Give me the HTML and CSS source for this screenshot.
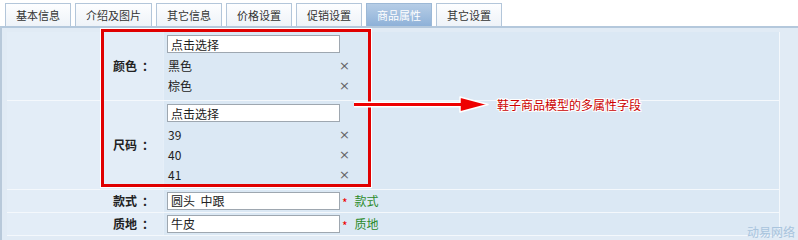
FILE: index.html
```html
<!DOCTYPE html>
<html lang="zh-CN">
<head>
  <meta charset="UTF-8">
  <title>商品属性</title>
  <link rel="stylesheet" href="styles.css">
</head>
<body>
<div class="page">
  <div class="tabs">
    <div class="tab">基本信息</div>
    <div class="tab">介绍及图片</div>
    <div class="tab">其它信息</div>
    <div class="tab">价格设置</div>
    <div class="tab">促销设置</div>
    <div class="tab active">商品属性</div>
    <div class="tab">其它设置</div>
  </div>
  <div class="panel">
    <table class="attrs">
      <tr class="multi first">
        <td class="label">颜色<span class="colon">：</span></td>
        <td class="data">
          <input class="field" type="text" value="点击选择">
          <div class="items">
            <div class="item"><span>黑色</span><span class="del">×</span></div>
            <div class="item"><span>棕色</span><span class="del">×</span></div>
          </div>
        </td>
      </tr>
      <tr class="multi">
        <td class="label">尺码<span class="colon">：</span></td>
        <td class="data">
          <input class="field" type="text" value="点击选择">
          <div class="items">
            <div class="item"><span>39</span><span class="del">×</span></div>
            <div class="item"><span>40</span><span class="del">×</span></div>
            <div class="item"><span>41</span><span class="del">×</span></div>
          </div>
        </td>
      </tr>
      <tr class="single">
        <td class="label">款式<span class="colon">：</span></td>
        <td class="data">
          <input class="field" type="text" value="圆头  中跟"><span class="req">*</span><span class="hint">款式</span>
        </td>
      </tr>
      <tr class="single">
        <td class="label">质地<span class="colon">：</span></td>
        <td class="data">
          <input class="field" type="text" value="牛皮"><span class="req">*</span><span class="hint">质地</span>
        </td>
      </tr>
    </table>

    <div class="mark-box"></div>
    <svg class="mark-arrow" width="140" height="20" viewBox="0 0 140 20">
      <path d="M3 9.5 H112" stroke="#fff" stroke-width="6" fill="none"/>
      <path d="M109 2 L137 9.5 L109 17 Z" fill="#e00" stroke="#fff" stroke-width="1.5" stroke-linejoin="round"/>
      <path d="M3 9.5 H112" stroke="#e00" stroke-width="3" fill="none"/>
    </svg>
    <div class="mark-text">鞋子商品模型的多属性字段</div>
    <div class="watermark">动易网络</div>
  </div>
</div>
</body>
</html>
```

FILE: styles.css
```css
body {
  margin: 0;
  background: #ffffff;
  font-family: "Noto Sans CJK SC", "DejaVu Sans", sans-serif;
  font-size: 12px;
  line-height: 16px;
  color: #222;
}
.page {
  width: 798px;
  height: 240px;
  overflow: hidden;
}
.tabs {
  display: flex;
  align-items: flex-end;
  gap: 4px;
  height: 26px;
  padding-left: 5px;
  box-sizing: border-box;
}
.tab {
  height: 23px;
  line-height: 22px;
  padding: 0 10px;
  min-width: 44px;
  text-align: center;
  font-size: 11px;
  color: #333;
  border: 1px solid #b3c6da;
  border-bottom: none;
  background: linear-gradient(#fdfeff, #eef3f8);
  box-sizing: border-box;
}
.tab.active {
  color: #ffffff;
  border-color: #9cb8d6;
  background: linear-gradient(#b6cde6, #8eb1d8);
}
.panel {
  position: relative;
  height: 214px;
  border-top: 2px solid #b4c8dc;
  border-left: 2px solid #b8c9da;
  background: #e1ebf5;
  padding: 4px 0 0 5px;
  box-sizing: border-box;
}
.attrs {
  width: 773px;
  border-collapse: collapse;
  border-right: 1px solid #f4f8fc;
}
.attrs td {
  border-bottom: 1px solid #f4f8fc;
  padding: 0;
}
.label {
  width: 147px;
  padding-right: 9px !important;
  text-align: right;
  font-weight: bold;
  background: #e3edf7;
}
.colon {
  margin-left: 5px;
}
.data {
  padding-left: 3px !important;
  background: #dbe8f4;
  border-left: 1px solid #e6eff8;
}
.multi .data {
  padding-top: 3px !important;
  padding-bottom: 4px !important;
}
.single .data {
  height: 22px;
}
.field {
  width: 173px;
  height: 18px;
  border: 1px solid #9ea7b0;
  padding: 0 3px;
  margin: 0;
  font-family: inherit;
  font-size: 12px;
  line-height: 16px;
  color: #222;
  background: #fff;
  box-sizing: border-box;
  vertical-align: middle;
  display: inline-block;
}
.multi .field {
  display: block;
}
.items {
  width: 183px;
  margin-top: 3px;
}
.item {
  display: flex;
  justify-content: space-between;
  align-items: center;
  height: 20px;
  padding-left: 1px;
}
.del {
  color: #666;
  font-size: 13px;
  font-family: "DejaVu Sans", sans-serif;
}
.req {
  color: #e00;
  margin-left: 2px;
  vertical-align: -4px;
}
.hint {
  color: #2b8b2b;
  margin-left: 7px;
  vertical-align: middle;
}
.mark-box {
  position: absolute;
  left: 99px;
  top: 1px;
  width: 264px;
  height: 152px;
  border: 3px solid #e00000;
  outline: 1px solid #ffffff;
}
.mark-arrow {
  position: absolute;
  left: 349px;
  top: 67px;
}
.mark-text {
  position: absolute;
  left: 495px;
  top: 69px;
  color: #cc0000;
  font-size: 12px;
  text-shadow: 1px 0 #fff, -1px 0 #fff, 0 1px #fff, 0 -1px #fff, 1px 1px #fff, -1px -1px #fff, 1px -1px #fff, -1px 1px #fff;
}
.watermark {
  position: absolute;
  right: 3px;
  bottom: 0;
  color: #a9c4dd;
  font-size: 12px;
}
```
